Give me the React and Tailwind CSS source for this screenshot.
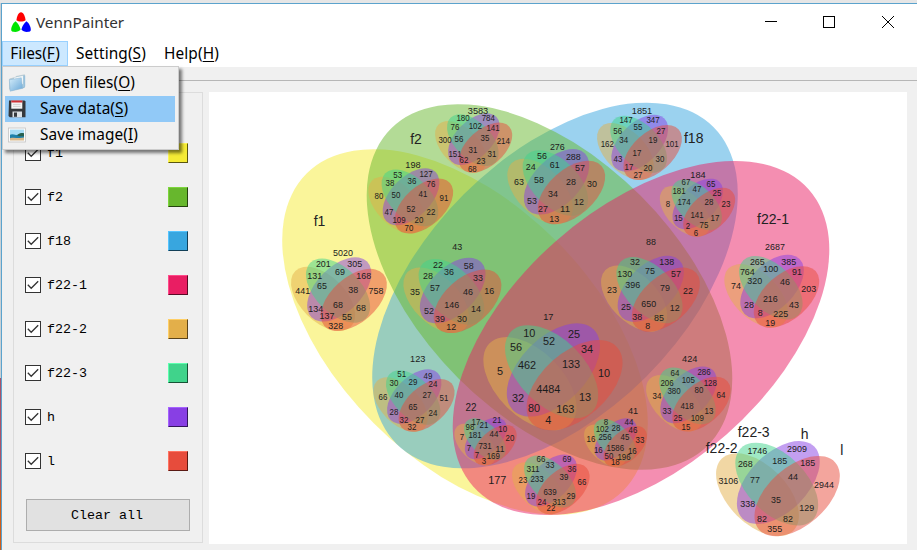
import React from "react";

const SETS = [
  { name: "f1", face: "bg-[#f5eb35]", edge: "border-t-[#fff75a] border-l-[#fff75a] border-r-[#5a5610] border-b-[#5a5610]" },
  { name: "f2", face: "bg-[#67b72d]", edge: "border-t-[#7dd63c] border-l-[#7dd63c] border-r-[#24430e] border-b-[#24430e]" },
  { name: "f18", face: "bg-[#38a6df]", edge: "border-t-[#55c4ff] border-l-[#55c4ff] border-r-[#123f57] border-b-[#123f57]" },
  { name: "f22-1", face: "bg-[#e91e63]", edge: "border-t-[#ff4a8a] border-l-[#ff4a8a] border-r-[#5a0a25] border-b-[#5a0a25]" },
  { name: "f22-2", face: "bg-[#e3af4a]", edge: "border-t-[#ffcf66] border-l-[#ffcf66] border-r-[#5a431a] border-b-[#5a431a]" },
  { name: "f22-3", face: "bg-[#40d38b]", edge: "border-t-[#5cffae] border-l-[#5cffae] border-r-[#175235] border-b-[#175235]" },
  { name: "h", face: "bg-[#883fe4]", edge: "border-t-[#a562ff] border-l-[#a562ff] border-r-[#33165a] border-b-[#33165a]" },
  { name: "l", face: "bg-[#e74c3c]", edge: "border-t-[#ff7361] border-l-[#ff7361] border-r-[#5a1a14] border-b-[#5a1a14]" },
];

// Each inner diagram: left, right and top bounds, number size, and its labels as [text, x, y, size?].
const DIAGRAMS = [
  { l: 291, r: 387, t: 257.3, size: 9, labels: [["5020",343,252.7],["201",323.3,263.7],["305",354.7,263.7],["69",340,271.7],["131",314.7,275.7],["168",363.7,275.7],["65",322,285.7],["38",353.3,290],["441",302.7,290.7],["758",376,290.7],["134",315.7,308.7],["68",338,304.7],["68",361,307.7],["137",327,315.7],["55",347,316.7],["328",335.7,325.7]] },
  { l: 368.3, r: 453.3, t: 168.3, size: 8, labels: [["198",413,164.7,9.3],["53",397.7,175.3],["127",426,174],["38",390,183],["36",412,181],["76",431,184],["80",379,196],["50",396,195],["41",423,194],["91",444,198],["47",389,212],["52",411,209],["22",431,212],["109",399,220],["20",419,220],["70",409,228]] },
  { l: 435, r: 512.3, t: 113.3, size: 8, labels: [["3583",478,110.7,9.3],["180",463,118],["784",488.3,118],["76",455,127],["102",475.3,126],["141",493,128],["300",445,140],["56",459,139],["35",485,138],["214",503.3,141],["151",455,154],["31",473,150],["31",492,154],["62",464,160],["23",481,161],["68",472.3,169]] },
  { l: 403.3, r: 501.5, t: 257.7, size: 9, labels: [["43",457.3,246.7],["22",438,264.7],["58",468.7,265.7],["28",428,275.7],["36",449,271.7],["33",478,277.7],["35",415,291.7],["57",435,287.7],["46",468,291.7],["16",489.3,290.7],["52",429,310.7],["146",451.7,304.7],["14",476,308.7],["39",440,318.7],["30",462,318.7],["12",451.3,326.7]] },
  { l: 507.3, r: 605.3, t: 149, size: 9, labels: [["276",557.3,146.7],["56",542,155.7],["288",573.3,156.7],["24",530.7,166.7],["61",554.7,164.3],["57",580,167.7],["63",519,181.7],["58",539,179.3],["28",571,181.7],["30",592,183.7],["53",532,200.7],["34",553,193.7],["12",579,201.7],["27",543,208.7],["11",565,208.7],["13",554.3,218.7]] },
  { l: 597, r: 682, t: 114.7, size: 8, labels: [["1851",642,110.7,9.3],["147",626,120],["347",653,120],["56",617.7,131],["55",638,127],["27",661,131],["162",607.3,144],["34",623.7,140],["19",653,140],["101",672,144],["43",618,159],["17",637,153],["30",660,159],["17",629,167],["20",648,168],["27",638,175]] },
  { l: 659.7, r: 735.3, t: 178.6, size: 8, labels: [["184",698,174.7,9.3],["67",686,182],["65",711,184],["181",679,191],["47",697,189],["25",717,193],["8",668,204],["174",684,202],["28",709,202],["23",726,204],["15",678.3,218],["141",697,215],["17",715,218],["2",688,226],["75",704,225],["6",696,233]] },
  { l: 601, r: 700, t: 255.7, size: 9, labels: [["88",651,242],["32",635,261.7],["138",666.7,261.7],["130",624.7,273.7],["75",650,270.7],["57",676,273.7],["23",612,289.7],["396",632.7,284.7],["79",665,287.7],["22",688,290.7],["25",626,306.7],["650",648.7,303.7],["12",674.7,307.7],["38",637.3,316.7],["85",659,317.7],["8",647.7,325.7]] },
  { l: 724.3, r: 819.3, t: 254.7, size: 9, labels: [["2687",775,246.7],["265",757.3,261.7],["385",788.7,261.7],["764",747.3,271.7],["100",770.7,268.7],["91",797,271.7],["74",736,285.7],["320",754.7,280.7],["46",785,281.7],["203",808.7,288.7],["28",749,304.7],["216",770.3,298.7],["43",794,304.7],["8",760.3,312.7],["225",780.7,313.7],["19",770.3,322.7]] },
  { l: 373.3, r: 454.7, t: 369.3, size: 8, labels: [["123",417.7,358.7,9.3],["51",401.7,374.3],["49",428,376],["30",394,383],["29",413,382],["24",433,384],["66",383,397],["40",399,395],["27",427,395],["51",444,398],["28",394,412],["65",413,407],["24",433,413],["32",404,420],["27",420,420],["32",412,427.3]] },
  { l: 454.3, r: 516.7, t: 417.5, size: 8, labels: [["22",471,406.7,10],["17",476,422],["21",497,420],["98",470,427],["21",484,425],["10",502.7,429],["7",462,437],["181",475,435],["44",494,434],["20",510,438],["7",469,448],["731",485,446],["11",500,449],["7",477,455.3],["169",493.3,456],["3",484,461]] },
  { l: 483.3, r: 622.7, t: 323.3, size: 11, labels: [["17",548.3,316,9.3],["10",529.3,333],["25",574,334],["56",516,347],["52",549,341],["34",587,349],["5",500,371],["462",527,365],["133",571,363.7],["10",604,373],["32",518,398],["4484",548.3,389],["13",585,397],["80",534,408],["163",565.3,409],["4",548.3,420.3]] },
  { l: 512, r: 589.7, t: 454.5, size: 8, labels: [["177",497.3,480.3,11],["66",541,459],["69",567,459],["311",533,469],["33",550,465],["36",572,469],["23",523,480],["233",537,479],["39",564,477],["66",582,482],["19",531,496],["639",550,492],["29",571,496],["24",542,502],["313",559,502],["22",551,508]] },
  { l: 584, r: 647, t: 418.3, size: 8, labels: [["41",633,410.7,9.3],["8",606,422],["44",629,422],["102",602.3,429],["28",616,428],["46",633,430],["16",591,439],["256",605,437],["45",625,437],["33",640,440],["16",598.3,450],["1586",615.3,448],["16",632.3,451],["50",609,456],["196",624,457],["18",615.3,462]] },
  { l: 646, r: 730.7, t: 366.5, size: 8, labels: [["424",689.7,358.7,9.3],["64",675,373],["286",704,372],["206",667,383],["105",688.3,380],["128",710.3,383],["34",657,396],["380",674,391],["80",699,390],["64",721,395],["33",667,411],["418",687,406],["13",709,411],["25",678,418],["109",697.3,418],["15",686,427]] },
  { l: 716, r: 840, t: 441, size: 9, labels: [["1746",757.3,450.7],["2909",797,449],["268",745.3,463.7],["185",779.7,460.7],["185",807.7,462.7],["3106",728.3,480.7],["77",755,479.7],["44",793,476.7],["2944",824,484.7],["338",747.7,503.7],["35",776,499.7],["129",806.7,507.7],["82",762,518.7],["82",788,518.7],["355",774.7,528.7]] },
];

const SET_LABELS = [
  ["f1", 319.5, 221.3], ["f2", 416, 139.3], ["f18", 693.7, 138.3], ["f22-1", 773, 219],
  ["f22-3", 753.7, 432.3], ["h", 804.7, 434], ["f22-2", 721.7, 448], ["l", 841.7, 450],
];

function Ellipse({ x, y, angle, fill }) {
  return <ellipse rx="224" ry="129" fill={fill} fillOpacity="0.5" transform={`translate(${x} ${y}) rotate(${angle})`} />;
}

function Label({ text, x, y, size }) {
  return (
    <text x={x} y={y + size * 0.36} fontSize={size} textAnchor="middle" fill="#222222">
      {text}
    </text>
  );
}

function Count({ text, x, y, size }) {
  return (
    <text
      x={x}
      y={y + size * 0.38}
      fontSize={size * 1.07}
      textLength={text.length * size * 0.55}
      lengthAdjust="spacingAndGlyphs"
      textAnchor="middle"
      fill="#1c1c1c"
    >
      {text}
    </text>
  );
}

function InnerVenn({ d }) {
  const s = (d.r - d.l) / 547;
  const cx = (d.l + d.r) / 2 - 2.5 * s;
  const cy = d.t + 187 * s;
  return (
    <g>
      <g transform={`translate(${cx} ${cy}) scale(${s})`}>
        <Ellipse x={-88} y={50} angle={45} fill="#e3af4a" />
        <Ellipse x={4} y={-4} angle={-45} fill="#883fe4" />
        <Ellipse x={-3} y={3} angle={45} fill="#40d38b" />
        <Ellipse x={87} y={56} angle={-41.5} fill="#e74c3c" />
      </g>
      {d.labels.map(([t, x, y, size], i) => (
        <Count key={i} text={t} x={x} y={y} size={size || d.size} />
      ))}
    </g>
  );
}

function VennCanvas() {
  return (
    <svg className="block h-[452px] w-[698px] bg-white font-['Liberation_Sans',Arial,sans-serif]" viewBox="209 92 698 452">
      <Ellipse x={465} y={332} angle={45} fill="#f5eb35" />
      <Ellipse x={555} y={285.5} angle={-45} fill="#38a6df" />
      <Ellipse x={549.5} y={287} angle={45} fill="#67b72d" />
      <Ellipse x={641} y={338} angle={-41.5} fill="#e91e63" />
      {DIAGRAMS.map((d, i) => <InnerVenn key={i} d={d} />)}
      {SET_LABELS.map(([t, x, y]) => <Label key={t} text={t} x={x} y={y} size={14} />)}
    </svg>
  );
}

function AppLogo() {
  return (
    <svg className="mr-[5px] h-5 w-5" viewBox="0 0 20 20">
      <path d="M10 0.3C12.6 0.3 14 4.5 14.6 8.2C12.5 10 7.5 10 5.4 8.2C6 4.5 7.4 0.3 10 0.3Z" fill="#ff0000" />
      <path d="M4.6 9.2C7 11.6 9 14 9.6 17.6C8 20.4 2 20.4 0.6 19C-0.8 17 1.6 11.2 4.6 9.2Z" fill="#00e600" />
      <path d="M15.4 9.2C13 11.6 11 14 10.4 17.6C12 20.4 18 20.4 19.4 19C20.8 17 18.4 11.2 15.4 9.2Z" fill="#0000ff" />
    </svg>
  );
}

function FolderIcon() {
  return (
    <svg className="h-[18px] w-[18px]" viewBox="0 0 18 18">
      <defs>
        <linearGradient id="folder" x1="0" y1="0" x2="1" y2="1">
          <stop offset="0" stopColor="#d4ecfa" /><stop offset="1" stopColor="#69a8d8" />
        </linearGradient>
      </defs>
      <path d="M1.5 5L7 3.5L8 2.5L16.5 0.8V13.5L3 16.5L1.5 15Z" fill="#a6c8dc" stroke="#b9c5cc" strokeWidth=".7" />
      <path d="M6 3.8L15 1.7V10L5 13Z" fill="#f2f6f8" />
      <path d="M1.3 5.8L13.3 3.8L14.6 14.3L2.2 17.2Z" fill="url(#folder)" stroke="#8fb6d2" strokeWidth=".5" />
      <path d="M14.6 14.3L16.7 12.5V1.5" fill="none" stroke="#8fbddd" strokeWidth="1" />
    </svg>
  );
}

function DiskIcon() {
  return (
    <svg className="h-[18px] w-[18px]" viewBox="0 0 18 18">
      <path d="M1 0.5H16.5L17.5 1.5V17.3H1.8L0.5 16Z" fill="#34383c" />
      <path d="M3.3 0.5H14.3V8.7H3.3Z" fill="#f5f5f5" />
      <path d="M3.3 0.5H14.3V2.5H3.3Z" fill="#cf2f35" />
      <path d="M5 4.4H12.6M5 6.4H12.6" stroke="#c9c9c9" strokeWidth=".8" />
      <path d="M4.5 11.5H14V17.3H4.5Z" fill="#dce1e4" />
      <path d="M6 12.5H9V16.8H6Z" fill="#34383c" />
    </svg>
  );
}

function ImageIcon() {
  return (
    <svg className="h-[18px] w-[18px]" viewBox="0 0 18 18">
      <rect x=".5" y="2" width="17" height="14" fill="#fbfbfb" stroke="#c4c4c4" strokeWidth=".8" />
      <rect x="2" y="3.6" width="14" height="6" fill="#a6dcf5" />
      <path d="M2 8.8C4 7.6 6 8.6 8 8.9L16 8.2V13H2Z" fill="#1f80a9" />
      <path d="M9 9.2C11 7 14 6.8 16 7.2V10.3H11Z" fill="#28604f" />
      <path d="M2 12.2C6 10.8 10 12.8 16 11.6V14.5H2Z" fill="#d9b98c" />
    </svg>
  );
}

function Mnemonic({ text, letter }) {
  return (
    <span>
      {text}(<span className="underline decoration-1 underline-offset-2">{letter}</span>)
    </span>
  );
}

function FilesMenu() {
  const items = [
    { text: "Open files", letter: "O", icon: <FolderIcon /> },
    { text: "Save data", letter: "S", icon: <DiskIcon />, active: true },
    { text: "Save image", letter: "I", icon: <ImageIcon /> },
  ];
  return (
    <div className="absolute left-0 top-[25px] z-10 h-[84px] w-[177px] border border-[#cccccc] bg-[#f0f0f0] px-[2px] py-[3px] shadow-[3px_3px_3px_rgba(0,0,0,0.5)]">
      {items.map((it) => (
        <div key={it.text} className={`flex h-[26px] w-[170px] items-center pl-[3px] text-[15.4px] tracking-[0.05px] ${it.active ? "bg-[#91c9f7]" : ""}`}>
          {it.icon}
          <span className="ml-[14px]"><Mnemonic text={it.text} letter={it.letter} /></span>
        </div>
      ))}
    </div>
  );
}

function WindowButtons() {
  return (
    <svg className="ml-auto h-[20px] w-[140px]" viewBox="0 0 140 20" fill="none" stroke="#000" shapeRendering="crispEdges">
      <path d="M8 9.5H20" />
      <path d="M66.5 4.5H77.5V15.5H66.5Z" />
      <path d="M125 4L137 16M137 4L125 16" shapeRendering="auto" />
    </svg>
  );
}

export default function App() {
  return (
    <div className="flex h-[550px] w-[917px] flex-col overflow-hidden bg-[#e6e6e6] pt-[3px] font-['Noto_Sans','Open_Sans',sans-serif] text-black">
      <div className="flex min-h-0 flex-1">
        <div className="flex w-px flex-col">
          <div className="h-[375px] bg-[#c9d0d5]" />
          <div className="h-[112px] bg-[#a7536b]" />
          <div className="flex-1 bg-[#cf5d1b]" />
        </div>
        <div className="flex flex-1 flex-col border-l border-t border-[#5ba3cd] bg-[#f0f0f0]">
          <header className="flex h-[37px] items-center bg-white pl-[9px] pr-[20px] pb-[2px]">
            <AppLogo />
            <span className="pt-px text-[15.3px] text-[#333333]">VennPainter</span>
            <WindowButtons />
          </header>
          <nav className="relative flex h-[27px] items-start border-b border-[#f0f0f0] bg-white text-[15.4px]">
            <div className="flex h-[25px] w-[66px] items-center justify-center border border-[#99d1ff] bg-[#cce8ff]">
              <Mnemonic text="Files" letter="F" />
            </div>
            <div className="flex h-[25px] w-[88px] items-center pl-2 tracking-[0.1px]"><Mnemonic text="Setting" letter="S" /></div>
            <div className="flex h-[25px] w-[72px] items-center pl-2 tracking-[0.1px]"><Mnemonic text="Help" letter="H" /></div>
            <FilesMenu />
          </nav>
          <div className="h-[12px] bg-[#f0f0f0]" />
          <div className="h-px bg-[#b6b6b6]" />
          <main className="flex pt-[11px]">
            <aside className="ml-[11px] flex h-[451px] w-[190px] flex-col border border-[#dcdcdc] pt-[38px] font-['Liberation_Mono',monospace] text-[13.33px]">
              {SETS.map((s) => (
                <div key={s.name} className="flex h-11 items-center pl-[11px] pr-[14px]">
                  <span className="flex h-4 w-4 items-center justify-center border border-[#333333] bg-white">
                    <svg className="h-[14px] w-[14px]" viewBox="0 0 14 14" fill="none" stroke="#333333" strokeWidth="1.3">
                      <path d="M1.8 6.8L5.2 10.3L12.2 3.2" />
                    </svg>
                  </span>
                  <span className="ml-[6px] pt-[2px]">{s.name}</span>
                  <span className={`ml-auto h-5 w-5 border ${s.face} ${s.edge}`} />
                </div>
              ))}
              <button className="ml-3 mt-4 h-8 w-[164px] border border-[#adadad] bg-[#e1e1e1] pr-[2px] pt-px">Clear all</button>
            </aside>
            <section className="ml-[6px]">
              <VennCanvas />
            </section>
          </main>
        </div>
      </div>
    </div>
  );
}
